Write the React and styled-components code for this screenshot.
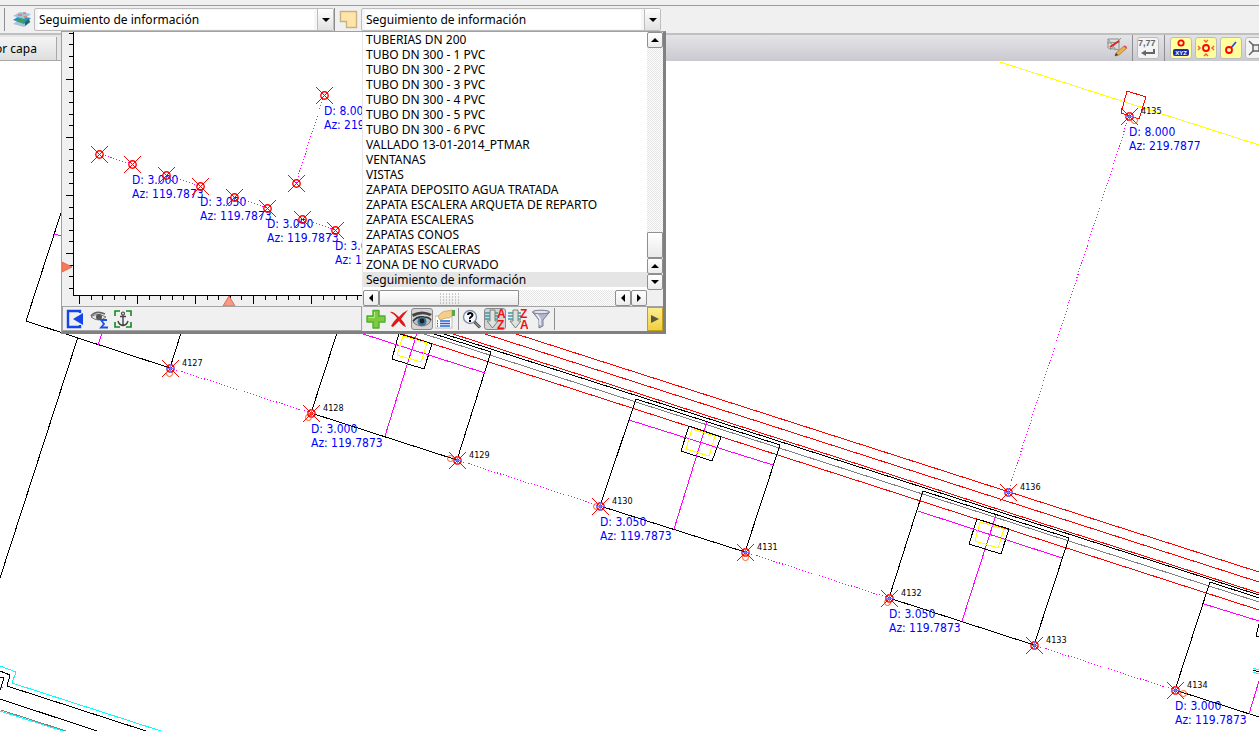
import React, { useState } from "react";
import styled, { createGlobalStyle } from "styled-components";

const GlobalStyle = createGlobalStyle`
  * { box-sizing: border-box; }
  html, body { margin: 0; padding: 0; }
  body {
    background: #fff;
    color: #000;
    font: 12px/15px "Noto Sans", "Open Sans", sans-serif;
    overflow: hidden;
  }
  button, select { font: inherit; color: inherit; }
`;

const Page = styled.div`
  display: flex;
  flex-direction: column;
  height: 100vh;
  overflow: hidden;
`;

const TopBar = styled.header`
  position: relative;
  z-index: 2;
  display: flex;
  align-items: center;
  height: 35px;
  padding-top: 5px;
  background: #f0f0f0;
  border-bottom: 2px solid #c0c0c0;
  &::before {
    content: "";
    position: absolute;
    top: 5px;
    left: 0;
    right: 0;
    height: 1px;
    background: #9c9c9c;
  }
`;

const BarIcon = styled.span`
  display: flex;
  align-items: center;
  justify-content: center;
  width: ${(p) => p.$width}px;
  height: 23px;
  border-left: ${(p) => (p.$ruled ? "1px solid #8c8c8c" : "0")};
`;

const ComboBox = styled.span`
  display: flex;
  width: ${(p) => p.$width}px;
  height: 23px;
  margin-top: 1px;
  border: 1px solid #bdbdbd;
  border-radius: 2px;
  background: #f6f6f6;
`;

const ComboSelect = styled.select`
  appearance: none;
  flex: 1;
  min-width: 0;
  margin: 1px 3px;
  padding: 0 1px;
  border: 0;
  outline: 0;
  background: #fff;
`;

const ComboArrow = styled.span`
  display: flex;
  align-items: center;
  justify-content: center;
  width: 16px;
  border-left: 1px solid #bdbdbd;
  background: linear-gradient(#fdfdfd, #e2e2e2);
`;

const SecondBar = styled.div`
  display: flex;
  justify-content: space-between;
  height: 26px;
  flex: none;
  overflow: hidden;
  background: linear-gradient(#e4e4e8, #c9c9cf);
`;

const LayerTab = styled.button`
  width: 57px;
  height: 24px;
  margin: 2px 0 0;
  padding: 0;
  border: 0;
  border-right: 1px solid #a8a8a8;
  border-bottom: 1px solid #a8a8a8;
  background: linear-gradient(#f4f4f4, #dedede);
  text-align: left;
  text-indent: -5px;
  white-space: nowrap;
  overflow: hidden;
`;

const TabArea = styled.div`
  width: 64px;
  background: #e6e6e6;
  border-bottom: 1px solid #a8a8a8;
`;

const SnapTools = styled.div`
  display: flex;
  align-items: center;
  gap: 3px;
  margin-right: -8px;
`;

const SnapButton = styled.button`
  display: flex;
  align-items: center;
  justify-content: center;
  width: 22px;
  height: 22px;
  padding: 0;
  border: ${(p) => (p.$flat ? "0" : "1px solid #bcbcbc")};
  border-radius: 3px;
  background: ${(p) => (p.$flat ? "transparent" : p.$active ? "#ffff9c" : "#f4f4f4")};
`;

const Divider = styled.span`
  width: 1px;
  height: ${(p) => p.$height}px;
  margin: 0 ${(p) => p.$gap}px;
  background: #8e8e92;
`;

const Drawing = styled.main`
  flex: 1;
  min-height: 0;
  display: flex;
  background: #fff;
`;

const Cad = styled.svg`
  display: block;
  width: 100%;
  height: 100%;
  fill: none;
  shape-rendering: crispEdges;
  font-family: "DejaVu Sans Condensed", "DejaVu Sans", sans-serif;
  text { stroke: none; }
`;

const Popup = styled.section`
  position: absolute;
  top: 31px;
  left: 61px;
  display: flex;
  width: 605px;
  height: 303px;
  border: 1px solid #a0a0a0;
  border-right: 3px solid #808080;
  border-bottom: 3px solid #808080;
  background: #f0f0f0;
`;

const PreviewPane = styled.div`
  display: flex;
  flex-direction: column;
  width: 300px;
`;

const PreviewView = styled.div`
  height: 274px;
`;

const PreviewTools = styled.div`
  display: flex;
  flex: 1;
  align-items: center;
  gap: 2px;
  padding-left: 1px;
  border: 1px solid #a4a4a4;
`;

const ListPane = styled.div`
  display: flex;
  flex-direction: column;
  flex: 1;
  min-width: 0;
  border-left: 1px solid #e8e8e8;
`;

const ListRow = styled.div`
  display: flex;
  height: 258px;
`;

const Options = styled.ul`
  flex: 1;
  margin: 0;
  padding: 0;
  list-style: none;
  background: #fff;
`;

const Option = styled.li`
  height: 15px;
  padding-left: 3px;
  line-height: 15px;
  white-space: nowrap;
  background: ${(p) => (p.$selected ? "#e5e5e5" : "transparent")};
`;

const track = `
  background: repeating-conic-gradient(#e4e4e4 0 25%, #fff 0 50%) 0 0 / 2px 2px;
`;

const VerticalScroll = styled.div`
  display: flex;
  flex-direction: column;
  width: 16px;
  ${track}
`;

const HorizontalScroll = styled.div`
  display: flex;
  width: 284px;
  height: 16px;
  ${track}
`;

const ScrollSpace = styled.span`
  flex: 1;
`;

const ScrollButton = styled.button`
  display: flex;
  flex: none;
  align-items: center;
  justify-content: center;
  width: 16px;
  height: 16px;
  padding: 0;
  border: 1px solid #8f8f8f;
  border-radius: 2px;
  background: linear-gradient(#fff, #ececec);
`;

const ScrollThumb = styled.span`
  display: flex;
  align-items: center;
  justify-content: center;
  width: ${(p) => p.$width}px;
  height: ${(p) => p.$height}px;
  border: 1px solid #8f8f8f;
  border-radius: 1px;
  background: linear-gradient(#fff, #e9e9e9);
`;

const ListTools = styled.div`
  display: flex;
  flex: 1;
  align-items: center;
  gap: 1px;
  padding-left: 2px;
  border-top: 1px solid #a4a4a4;
`;

const ToolButton = styled.button`
  display: flex;
  align-items: center;
  justify-content: center;
  width: 22px;
  height: 22px;
  padding: 0;
  border: 1px solid ${(p) => (p.$pressed ? "#8a8a8a" : "transparent")};
  border-radius: 3px;
  background: ${(p) => (p.$pressed ? "#d4d4d4" : "transparent")};
`;

const NextButton = styled.button`
  display: flex;
  align-items: center;
  justify-content: center;
  width: 16px;
  align-self: stretch;
  margin-left: auto;
  padding: 0;
  border: 1px solid #c4a018;
  background: linear-gradient(#fcee90, #f0d040);
`;

const layers = [
  "TUBERIAS DN 200",
  "TUBO DN 300 - 1 PVC",
  "TUBO DN 300 - 2 PVC",
  "TUBO DN 300 - 3 PVC",
  "TUBO DN 300 - 4 PVC",
  "TUBO DN 300 - 5 PVC",
  "TUBO DN 300 - 6 PVC",
  "VALLADO 13-01-2014_PTMAR",
  "VENTANAS",
  "VISTAS",
  "ZAPATA DEPOSITO AGUA TRATADA",
  "ZAPATA ESCALERA ARQUETA DE REPARTO",
  "ZAPATA ESCALERAS",
  "ZAPATAS CONOS",
  "ZAPATAS ESCALERAS",
  "ZONA DE NO CURVADO",
  "Seguimiento de información",
];

const RED = "#ff0000";
const MAGENTA = "#ff00ff";
const BLUE = "#0000ff";

/* Survey points: position, name, offset of the orange vertex circle, tag */
const points = [
  { x: 170, y: 368, name: "4127", ring: [-1, 5] },
  { x: 311, y: 413, name: "4128", ring: [-3, 4], tag: ["D: 3.000", "Az: 119.7873"] },
  { x: 457, y: 460, name: "4129", ring: [-7, -2] },
  { x: 600, y: 506, name: "4130", ring: [-4, 0], tag: ["D: 3.050", "Az: 119.7873"] },
  { x: 745, y: 552, name: "4131", ring: [0, 5] },
  { x: 889, y: 598, name: "4132", ring: [-2, 4], tag: ["D: 3.050", "Az: 119.7873"] },
  { x: 1034, y: 645, name: "4133" },
  { x: 1175, y: 690, name: "4134", ring: [8, 3], tag: ["D: 3.000", "Az: 119.7873"] },
  { x: 1129, y: 116, name: "4135", ring: [5, 4], tag: ["D: 8.000", "Az: 219.7877"] },
  { x: 1008, y: 492, name: "4136" },
];

const previewPoints = [
  { x: 99, y: 154 },
  { x: 132, y: 164, tag: ["D: 3.000", "Az: 119.7873"] },
  { x: 166, y: 175 },
  { x: 200, y: 186, tag: ["D: 3.050", "Az: 119.7873"] },
  { x: 234, y: 197 },
  { x: 267, y: 208, tag: ["D: 3.050", "Az: 119.7873"] },
  { x: 302, y: 219 },
  { x: 335, y: 230, tag: ["D: 3.000", "Az: 119.7873"] },
  { x: 324, y: 95, tag: ["D: 8.000", "Az: 219.7877"] },
  { x: 296, y: 183 },
];

const strokes = [
  ["#ffff00", "M1000 62L1259 145"],
  ["#000", "M61 213L26 321L170 368L181 333M78 337L0 578"],
  [MAGENTA, "M54 234L62 236M102 333L98 345"],
  [RED, "M513 333L1259 572M482 333L1259 582M450 333L1259 593M399 333L1259 610"],
  ["#808080", "M421 333L1259 602"],
  ["#000", "M441 333L1259 595"],
  ["#000", "M337 333L311 413L457 460L491 352L431 333M399 333L392 359L424 369L432 344L400 334"],
  [MAGENTA, "M360 333L485 373M417 333L385 436"],
  ["#000", "M636 399L600 506L745 552L780 445ZM689 426L681 451L712 461L721 437Z"],
  [MAGENTA, "M629 420L773 465M707 422L674 529"],
  ["#000", "M923 491L889 598L1034 645L1069 538ZM977 519L969 544L1001 554L1009 529Z"],
  [MAGENTA, "M918 511L1062 558M996 515L962 621"],
  ["#000", "M1259 598L1210 582L1175 690L1259 717M1259 624L1256 636L1259 637"],
  [MAGENTA, "M1204 604L1259 621M1259 681L1249 714"],
  ["#ffff00", "M403 336L397 355L421 362L427 343Z"],
  ["#ffff00", "M692 429L686 449L709 456L715 436Z"],
  ["#ffff00", "M980 522L975 541L998 548L1004 529Z"],
  [RED, "M1127 91L1146 97L1139 119L1121 113Z"],
  [MAGENTA, "M170 368L311 413M457 460L600 506M745 552L889 598M1034 645L1175 690", "1 2"],
  [MAGENTA, "M1008 492L1129 116", "1 2"],
  ["#00ffff", "M0 666L16 672L12 683L161 731M0 711L63 731M1253 668L1259 670M1253 672L1259 674"],
  ["#808080", "M1 710L66 731"],
  ["#000", "M0 671L10 675L7 686L146 731M0 677L4 678L0 690M0 699L97 731M1253 670L1259 672"],
  [MAGENTA, "M0 687H3"],
];

function Marker({ x, y, ring, cross }) {
  return (
    <g stroke={RED}>
      <path d={`M${x - 8} ${y - 8}L${x + 9} ${y + 9}M${x - 8} ${y + 9}L${x + 9} ${y - 8}`} />
      <g shapeRendering="auto" transform="translate(0.5,0.5)">
        {ring && <circle cx={x + ring[0]} cy={y + ring[1]} r="3" stroke="#ff5a18" />}
        <circle cx={x} cy={y} r="3.7" strokeWidth="1.4" />
      </g>
      {cross && <path stroke="#7878ff" d={`M${x - 4} ${y + 0.5}H${x + 5}M${x + 0.5} ${y - 4}V${y + 5}`} />}
    </g>
  );
}

function Tag({ x, y, lines }) {
  return (
    <g fill={BLUE} fontSize="12">
      <text x={x} y={y + 20}>{lines[0]}</text>
      <text x={x} y={y + 34}>{lines[1]}</text>
    </g>
  );
}

function MainDrawing() {
  return (
    <Cad role="img" aria-label="Plano">
      <g transform="translate(0,-61)">
        {strokes.map(([color, d, dash]) => (
          <path key={d} stroke={color} d={d} strokeDasharray={dash} />
        ))}
        {points.map((p) => (
          <g key={p.name}>
            <Marker x={p.x} y={p.y} ring={p.ring} cross />
            <text x={p.x + 12} y={p.y - 2} fill="#000" fontSize="9">{p.name}</text>
            {p.tag && <Tag x={p.x} y={p.y} lines={p.tag} />}
          </g>
        ))}
      </g>
    </Cad>
  );
}

function PreviewDrawing() {
  const vertical = Array.from({ length: 23 }, (_, i) => ({ at: Math.round(32.5 + i * 11.6), big: i % 5 === 4 }));
  const horizontal = Array.from({ length: 25 }, (_, i) => ({ at: Math.round(79 + i * 11.6), big: i % 5 === 0 }));
  return (
    <Cad role="img" aria-label="Vista previa">
      <g transform="translate(-62,-32)">
        <rect x="73" y="32" width="289" height="264" fill="#fff" />
        <path
          stroke={MAGENTA}
          strokeDasharray="1 2"
          d="M99 154L132 164M166 175L200 186M234 197L267 208M302 219L335 230M296 183L324 95"
        />
        {previewPoints.map((p) => (
          <g key={`${p.x}-${p.y}`}>
            {p.tag && <Tag x={p.x} y={p.y} lines={p.tag} />}
            <Marker x={p.x} y={p.y} />
          </g>
        ))}
        <path stroke="#000" d="M73.5 32V295.500H362" />
        {vertical.map((t) => (
          <path key={t.at} stroke="#000" d={`M73 ${t.at + 0.5}H${t.big ? 66 : 69}`} />
        ))}
        {horizontal.map((t) => (
          <path key={t.at} stroke="#000" d={`M${t.at + 0.5} 296V${t.big ? 304 : 300}`} />
        ))}
        <g shapeRendering="auto">
          <path fill="#f47a5c" stroke="#e8694a" d="M62 262L72 267L62 272Z" />
          <path fill="#f49a86" stroke="#e8694a" d="M229 296L223 306H235Z" />
        </g>
      </g>
    </Cad>
  );
}

function Arrow({ dir }) {
  const shapes = { up: "M0 6L4 2L8 6Z", down: "M0 2L4 6L8 2Z", left: "M6 0L2 4L6 8Z", right: "M2 0L6 4L2 8Z" };
  return (
    <svg width="8" height="8" aria-hidden="true">
      <path d={shapes[dir]} fill="#000" />
    </svg>
  );
}

function Combo({ width, label, value, onChange }) {
  return (
    <ComboBox $width={width}>
      <ComboSelect aria-label={label} value={value} onChange={(e) => onChange(e.target.value)}>
        {layers.map((l) => <option key={l}>{l}</option>)}
      </ComboSelect>
      <ComboArrow><Arrow dir="down" /></ComboArrow>
    </ComboBox>
  );
}

const Svg = ({ children, size = 20 }) => (
  <svg width={size} height={size} viewBox="0 0 20 20" fill="none" aria-hidden="true">{children}</svg>
);

const LayersIcon = () => (
  <Svg>
    <path d="M1 15L7 11L19 13L12 18Z" fill="#a9c4d8" />
    <path d="M1 11L7 7L19 9L12 15Z" fill="#2f8fc4" />
    <path d="M4 12L9 9L14 10L11 14Z" fill="#3da04a" />
    <path d="M13 13L17 10L18 13L13 17Z" fill="#1c6b6b" />
    <path d="M1 7L8 3L19 5L12 10Z" fill="#9cc4dc" />
    <path d="M6 6H10M11 4H14M12 8H15" stroke="#e07a70" strokeWidth="1.500" />
  </Svg>
);

const LayerShapeIcon = () => (
  <Svg>
    <path d="M2.500 2.500H18.500V18.500H8.500V12.500H2.500Z" fill="#ffe6a8" stroke="#c9b184" strokeWidth="1.400" />
  </Svg>
);

const EditMeshIcon = () => (
  <Svg>
    <path d="M1 1H12V12L1 10ZM1 1L9 12M3 12L14 0M0 5L13 4" stroke="#8a958a" />
    <path d="M3 9L12 3" stroke="#e02020" strokeWidth="1.600" />
    <path d="M8 18L9 15L17 8L20 10L12 17Z" fill="#efb04a" stroke="#a57030" strokeWidth=".7" />
    <path d="M17 8L20 10" stroke="#e05a5a" strokeWidth="2" />
    <path d="M8 18L9 15L11 17Z" fill="#333" />
  </Svg>
);

const ReturnIcon = () => (
  <Svg>
    <text x="0" y="8" fontSize="9" fontWeight="700" fill="#666" fontFamily="Liberation Sans, sans-serif">7,77</text>
    <path d="M16 11V15H6" stroke="#666" strokeWidth="2" />
    <path d="M3 15L8 12V18Z" fill="#666" />
  </Svg>
);

const XyzIcon = () => (
  <Svg>
    <circle cx="10" cy="5" r="2.700" stroke={RED} strokeWidth="1.800" />
    <rect x="2" y="11" width="16" height="7" rx="2" fill="#1c2cb0" />
    <text x="10" y="17" fontSize="6" fontWeight="700" textAnchor="middle" fill="#fff" fontFamily="Liberation Sans, sans-serif">XYZ</text>
  </Svg>
);

const CenterIcon = () => (
  <Svg>
    <circle cx="10" cy="10" r="3" stroke={RED} strokeWidth="1.800" />
    <path d="M8 2L10 4L12 2M8 18L10 16L12 18M2 8L4 10L2 12M18 8L16 10L18 12" stroke="#f0603c" strokeWidth="1.500" />
  </Svg>
);

const EndIcon = () => (
  <Svg>
    <path d="M10 10L15 4" stroke="#2050e0" strokeWidth="1.800" />
    <circle cx="8" cy="12" r="3" stroke={RED} strokeWidth="1.800" />
  </Svg>
);

const NodeIcon = () => (
  <Svg>
    <path d="M3 3L8 8M17 3L12 8M3 17L8 12M17 17L12 12" stroke="#666" strokeWidth="1.500" />
    <rect x="7" y="7" width="6" height="6" fill="#eee" stroke="#666" strokeWidth="1.500" />
  </Svg>
);

const ImportIcon = () => (
  <Svg>
    <path d="M15 4V2H3V18H15V16" stroke="#1545e8" strokeWidth="2.400" />
    <path d="M8 10L18 4V16Z" fill="#1545e8" />
  </Svg>
);

const EyeSumIcon = () => (
  <Svg>
    <path d="M2 7Q7 1 16 5" stroke="#666" strokeWidth="1.800" />
    <path d="M2 8Q8 3 17 8Q10 14 2 8Z" fill="#e4e4e4" stroke="#777" />
    <circle cx="10" cy="8" r="3" fill="#555" />
    <path d="M18 11H12L15 15L12 18.500H19" stroke="#1c50e0" strokeWidth="1.800" />
  </Svg>
);

const AnchorIcon = () => (
  <Svg>
    <path d="M2 7V2H7M13 2H18V7M18 13V18H13M7 18H2V13" stroke="#118a1c" strokeWidth="1.600" />
    <circle cx="10" cy="4.500" r="1.500" stroke="#444" strokeWidth="1.200" />
    <path d="M10 6V16M7 7.500H13M5 12Q6 16 10 16.500Q14 16 15 12" stroke="#444" strokeWidth="1.400" />
  </Svg>
);

const PlusIcon = () => (
  <Svg>
    <path d="M7 1.500H13V7H19V13H13V19H7V13H1V7H7Z" fill="#7ecb40" stroke="#4fb030" strokeWidth="1.400" strokeLinejoin="round" />
    <path d="M8.500 3V8.500H2.500" stroke="#b6ea86" />
  </Svg>
);

const DeleteIcon = () => (
  <Svg>
    <path d="M1 3Q4 2 10 8Q14 3 19 1Q15 6 12 10Q16 14 17 18Q13 17 10 12Q6 16 4 18L2 17Q4 13 8 9Q5 5 1 3Z" fill="#e01818" />
  </Svg>
);

const EyeIcon = () => (
  <Svg>
    <path d="M0 5Q10 0 20 5L18 7Q10 3 1 8Z" fill="#444" />
    <path d="M1 13Q4 7 11 8Q17 8 19 11Q17 17 9 17Q3 16 1 13Z" fill="#b8c0c4" stroke="#777" />
    <path d="M1 12Q5 7 12 8Q17 8 19 11" stroke="#333" strokeWidth="1.600" />
    <circle cx="10" cy="12.500" r="4.500" fill="#3f6f8c" />
    <circle cx="10" cy="12" r="2.400" fill="#10222e" />
  </Svg>
);

const PropertiesIcon = () => (
  <Svg>
    <rect x="0" y="7" width="17" height="12" fill="#fff" stroke="#bbb" />
    <path d="M2 12H3M2 14.500H3M2 17H3M5 12H15M5 14.500H15M5 17H15" stroke="#2060e0" strokeWidth="1.300" />
    <path d="M3 8Q6 2 12 2L17 1V7Q15 10 11 9L5 11Z" fill="#f4cf8a" stroke="#c69850" strokeWidth=".7" />
    <rect x="17" y="1" width="3" height="6" fill="#58a848" />
  </Svg>
);

const HelpSearchIcon = () => (
  <Svg>
    <circle cx="8" cy="8" r="6.500" fill="#f5f8ff" stroke="#8090a8" strokeWidth="1.400" />
    <path d="M12.500 13L18 18.500" stroke="#444" strokeWidth="3" />
    <path d="M13 13.500L18 18.500" stroke="#ccc" />
    <path d="M6 6Q6 4 8 4T10.500 6Q10.500 7 9 8T8 10M8 11V13" stroke="#000" strokeWidth="2" />
  </Svg>
);

const SortIcon = ({ top, bottom }) => (
  <Svg>
    <path d="M0 4H13M0 7H13M0 10H13" stroke="#3c98b0" strokeWidth="1.300" />
    <path d="M5 1H10V12H13L7.500 19L2 12H5Z" fill="#dde4dc" stroke="#78827c" />
    <g fill="#f01010" fontFamily="Liberation Sans, sans-serif" fontWeight="700" fontSize="12">
      <text x="12" y="9">{top}</text>
      <text x="12" y="20">{bottom}</text>
    </g>
  </Svg>
);

const FunnelIcon = () => (
  <Svg>
    <path d="M1.500 3L8 11V19L12 17V11L18.500 3Z" fill="#b4b8c8" stroke="#787c90" />
    <path d="M5 4L9 10V16" stroke="#eef" strokeWidth="1.500" />
    <ellipse cx="10" cy="3" rx="8.500" ry="1.800" fill="#dfe2ec" stroke="#787c90" />
  </Svg>
);

function LayerPopup({ value, onPick }) {
  return (
    <Popup>
      <PreviewPane>
        <PreviewView><PreviewDrawing /></PreviewView>
        <PreviewTools>
          <ToolButton aria-label="Cargar"><ImportIcon /></ToolButton>
          <ToolButton aria-label="Ver suma"><EyeSumIcon /></ToolButton>
          <ToolButton aria-label="Anclar"><AnchorIcon /></ToolButton>
        </PreviewTools>
      </PreviewPane>
      <ListPane>
        <ListRow>
          <Options role="listbox" aria-label="Capas">
            {layers.map((l) => (
              <Option key={l} role="option" aria-selected={l === value} $selected={l === value} onClick={() => onPick(l)}>
                {l}
              </Option>
            ))}
          </Options>
          <VerticalScroll>
            <ScrollButton aria-label="Subir"><Arrow dir="up" /></ScrollButton>
            <ScrollSpace />
            <ScrollThumb $width={16} $height={26} />
            <ScrollButton aria-label="Subir"><Arrow dir="up" /></ScrollButton>
            <ScrollButton aria-label="Bajar"><Arrow dir="down" /></ScrollButton>
          </VerticalScroll>
        </ListRow>
        <HorizontalScroll>
          <ScrollButton aria-label="Izquierda"><Arrow dir="left" /></ScrollButton>
          <ScrollThumb $width={140} $height={16}>
            <svg width="20" height="11" aria-hidden="true">
              <path d="M1 1H20M1 4H20M1 7H20M1 10H20" stroke="#999" strokeDasharray="1 2" />
            </svg>
          </ScrollThumb>
          <ScrollSpace />
          <ScrollButton aria-label="Izquierda"><Arrow dir="left" /></ScrollButton>
          <ScrollButton aria-label="Derecha"><Arrow dir="right" /></ScrollButton>
        </HorizontalScroll>
        <ListTools>
          <ToolButton aria-label="Nueva capa"><PlusIcon /></ToolButton>
          <ToolButton aria-label="Eliminar"><DeleteIcon /></ToolButton>
          <ToolButton aria-label="Visible" $pressed><EyeIcon /></ToolButton>
          <ToolButton aria-label="Propiedades"><PropertiesIcon /></ToolButton>
          <Divider $height={22} $gap={1} />
          <ToolButton aria-label="Buscar"><HelpSearchIcon /></ToolButton>
          <ToolButton aria-label="Orden ascendente" $pressed><SortIcon top="A" bottom="Z" /></ToolButton>
          <ToolButton aria-label="Orden descendente"><SortIcon top="Z" bottom="A" /></ToolButton>
          <ToolButton aria-label="Filtrar"><FunnelIcon /></ToolButton>
          <Divider $height={22} $gap={1} />
          <NextButton aria-label="Más">
            <svg width="8" height="8" aria-hidden="true"><path d="M0 0L8 4L0 8Z" fill="#5c5640" /></svg>
          </NextButton>
        </ListTools>
      </ListPane>
    </Popup>
  );
}

export default function App() {
  const [previewLayer, setPreviewLayer] = useState("Seguimiento de información");
  const [layer, setLayer] = useState("Seguimiento de información");
  return (
    <Page>
      <GlobalStyle />
      <TopBar>
        <Divider $height={23} $gap={4} />
        <BarIcon $width={25}><LayersIcon /></BarIcon>
        <Combo width={300} label="Capa de trabajo" value={previewLayer} onChange={setPreviewLayer} />
        <BarIcon $width={27} $ruled><LayerShapeIcon /></BarIcon>
        <Combo width={300} label="Capa activa" value={layer} onChange={setLayer} />
        <LayerPopup value={layer} onPick={setLayer} />
      </TopBar>
      <SecondBar>
        <TabArea><LayerTab>or capa</LayerTab></TabArea>
        <SnapTools>
          <SnapButton $flat aria-label="Editar malla"><EditMeshIcon /></SnapButton>
          <Divider $height={26} $gap={1} />
          <SnapButton aria-label="Precisión"><ReturnIcon /></SnapButton>
          <Divider $height={26} $gap={2} />
          <SnapButton $active aria-label="Coordenadas XYZ"><XyzIcon /></SnapButton>
          <SnapButton $active aria-label="Centro"><CenterIcon /></SnapButton>
          <SnapButton $active aria-label="Extremo"><EndIcon /></SnapButton>
          <SnapButton aria-label="Nodo"><NodeIcon /></SnapButton>
        </SnapTools>
      </SecondBar>
      <Drawing><MainDrawing /></Drawing>
    </Page>
  );
}
